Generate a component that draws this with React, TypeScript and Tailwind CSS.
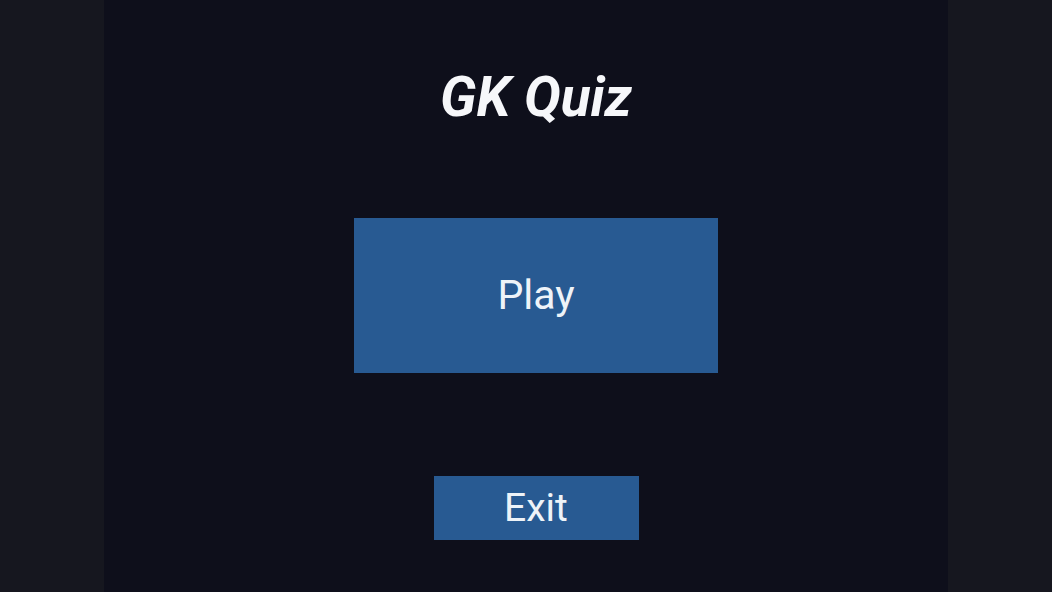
export default function App() {
    return (
        <div className="flex h-[592px] w-[1052px] overflow-hidden bg-[#0e0f1b] font-['Roboto',_'Liberation_Sans',_sans-serif]">
            {/* Left letterbox */}
            <div className="h-full w-[104px] shrink-0 bg-[#16171f]" />

            {/* Menu */}
            <main className="flex h-full flex-1 flex-col items-center bg-[#0e0f1b] pl-[20px] pt-[70px]">
                <h1 className="text-[55px] font-bold italic leading-none text-[#f6f7fa]">
                    GK Quiz
                </h1>

                <button className="mt-[93px] flex h-[155px] w-[364px] items-center justify-center bg-[#285a92] text-[41px] leading-none text-[#eef3f8]">
                    Play
                </button>

                <button className="mt-[103px] flex h-[64px] w-[205px] items-center justify-center bg-[#285a92] text-[39px] leading-none text-[#eef3f8]">
                    Exit
                </button>
            </main>

            {/* Right letterbox */}
            <div className="h-full w-[104px] shrink-0 bg-[#16171f]" />
        </div>
    );
}
